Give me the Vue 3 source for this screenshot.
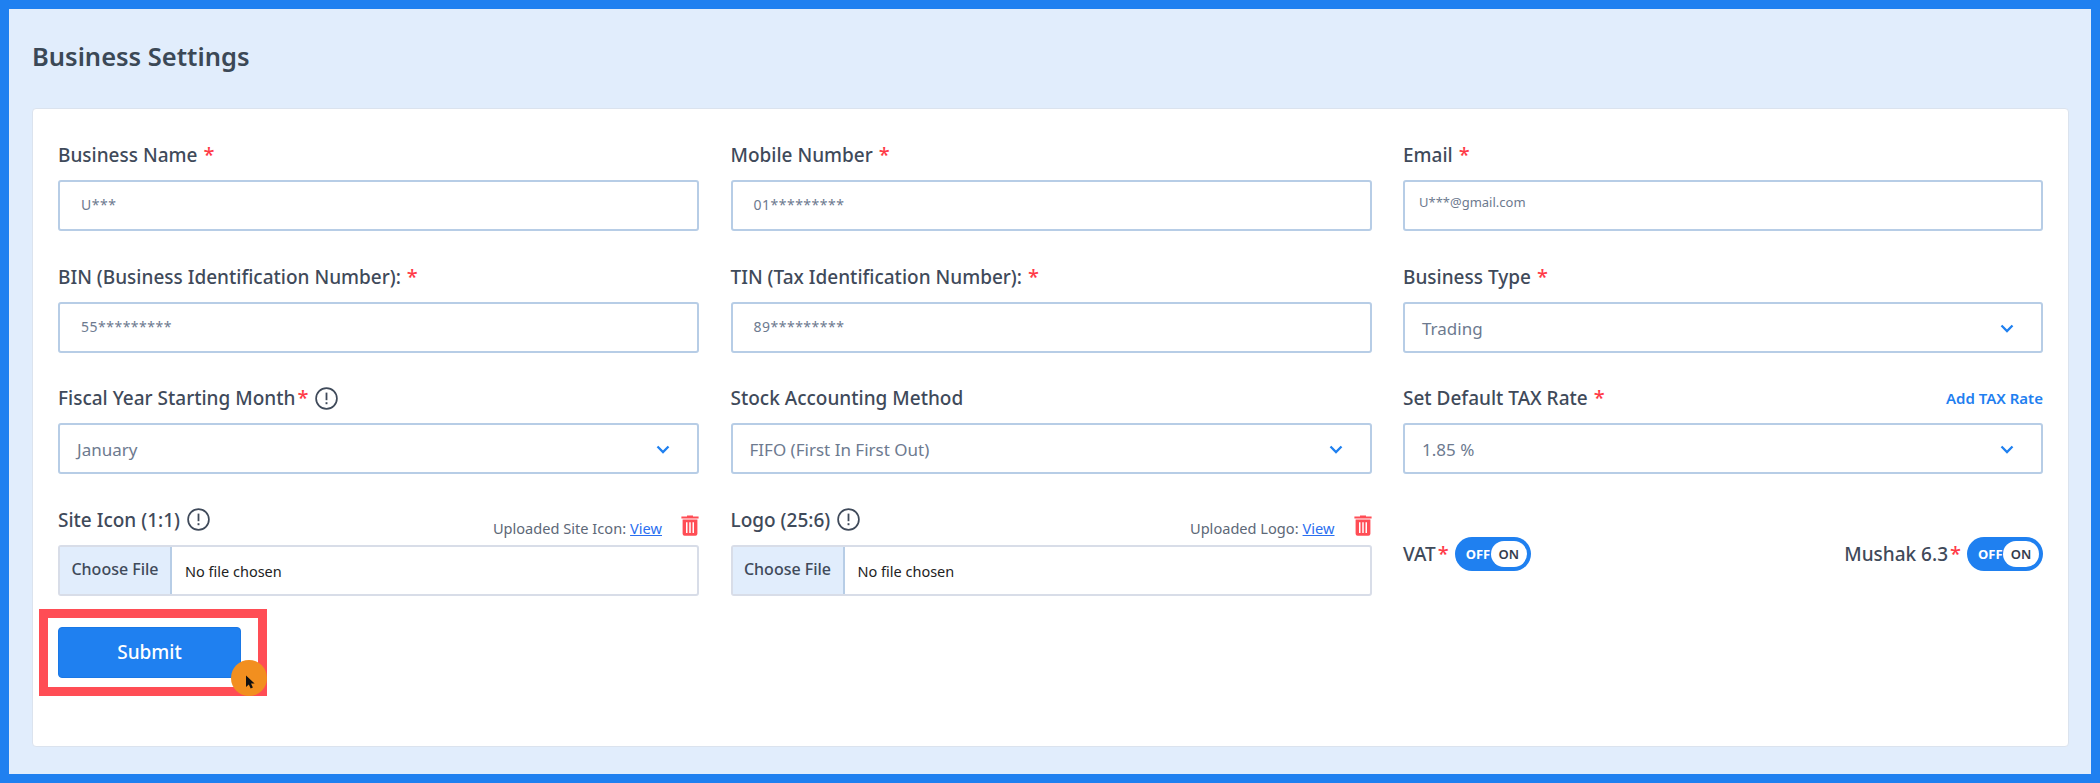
<script setup>
const fields = [
  { label: "Business Name", star: true, type: "input", value: "U***" },
  { label: "Mobile Number", star: true, type: "input", value: "01*********" },
  { label: "Email", star: true, type: "input", value: "U***@gmail.com", small: true },
  { label: "BIN (Business Identification Number):", star: true, type: "input", value: "55*********" },
  { label: "TIN (Tax Identification Number):", star: true, type: "input", value: "89*********" },
  { label: "Business Type", star: true, type: "select", value: "Trading" },
  { label: "Fiscal Year Starting Month", star: true, tight: true, info: true, type: "select", value: "January" },
  { label: "Stock Accounting Method", type: "select", value: "FIFO (First In First Out)" },
  { label: "Set Default TAX Rate", star: true, link: "Add TAX Rate", type: "select", value: "1.85 %" },
  { label: "Site Icon (1:1)", info: true, type: "file", uploaded: "Uploaded Site Icon:" },
  { label: "Logo (25:6)", info: true, type: "file", uploaded: "Uploaded Logo:" },
];

const toggles = ["VAT", "Mushak 6.3"];
</script>

<template>
  <div class="page">
    <h1 class="title">Business Settings</h1>

    <div class="card">
      <div class="grid">
        <div v-for="f in fields" :key="f.label" class="field">
          <div class="label-row">
            <label class="label">
              {{ f.label }}<span v-if="f.star" class="star" :class="{ tight: f.tight }">*</span>
            </label>
            <svg v-if="f.info" class="info" width="23" height="23" viewBox="0 0 23 23" fill="none">
              <circle cx="11.5" cy="11.5" r="10.4" stroke="#3f4a5a" stroke-width="1.7" />
              <path d="M11.5 5.6v7.6" stroke="#3f4a5a" stroke-width="1.8" />
              <path d="M11.5 15.2v2" stroke="#3f4a5a" stroke-width="1.9" />
            </svg>
            <a v-if="f.link" class="add-link">{{ f.link }}</a>
            <div v-if="f.uploaded" class="uploaded">
              <span>{{ f.uploaded }}</span>
              <a class="view">View</a>
              <svg class="trash" width="18" height="21" viewBox="0 0 18 21">
                <path d="M6 1.6V.4h6v1.2h5.6v1.8H.4V1.600z" fill="#ff4d55" />
                <path
                  fill-rule="evenodd"
                  d="M1.600 4.600h14.800v14.200a2 2 0 0 1-2 2H3.600a2 2 0 0 1-2-2zM5 7.200v10.800h1.500V7.200zM8.250 7.200v10.800h1.500V7.200zM11.500 7.200v10.800H13V7.200z"
                  fill="#ff4d55"
                />
              </svg>
            </div>
          </div>

          <div v-if="f.type === 'input'" class="control text-input" :class="{ small: f.small }">
            {{ f.value }}
          </div>

          <div v-else-if="f.type === 'select'" class="control select">
            <span>{{ f.value }}</span>
            <svg width="14" height="9" viewBox="0 0 14 9" fill="none">
              <path d="M1.500 1.500 7 7l5.500-5.500" stroke="#1f80f0" stroke-width="2.300" />
            </svg>
          </div>

          <div v-else class="control file">
            <span class="file-btn">Choose File</span>
            <span class="file-name">No file chosen</span>
          </div>
        </div>

        <div class="toggles">
          <div v-for="t in toggles" :key="t" class="toggle-item">
            <span class="toggle-label">{{ t }}<span class="star tight">*</span></span>
            <div class="toggle">
              <span class="off">OFF</span>
              <span class="on">ON</span>
            </div>
          </div>
        </div>
      </div>

      <div class="submit-wrap">
        <button class="submit" type="button">Submit</button>
        <div class="highlight"></div>
        <div class="pointer">
          <svg width="11" height="14" viewBox="0 0 11 14">
            <path d="M1 0.500v11.500l2.800-2.600 1.900 4.200 2.200-1-1.900-4.100h3.600z" fill="#111" />
          </svg>
        </div>
      </div>
    </div>
  </div>
</template>

<style>
body {
  margin: 0;
}
</style>

<style scoped>
.page {
  box-sizing: border-box;
  width: 2100px;
  height: 783px;
  border: 9px solid #1f80f0;
  background: #e1edfc;
  padding: 30px 22px 27px 23px;
  font-family: "Noto Sans", sans-serif;
  color: #3f4a5a;
}

.title {
  margin: 0 0 35px;
  font-size: 25.5px;
  line-height: 34px;
  font-weight: 600;
  color: #3b4856;
}

.card {
  box-sizing: border-box;
  height: 639px;
  background: #fff;
  border: 1px solid #dbe3ee;
  border-radius: 4px;
  padding: 31px 25px 0;
}

.grid {
  display: grid;
  grid-template-columns: 641px 641px 640px;
  column-gap: 31.5px;
  row-gap: 30.5px;
}

.field {
  min-width: 0;
}

.label-row {
  display: flex;
  align-items: center;
  height: 30px;
  margin-bottom: 10px;
}

.label {
  font-size: 19px;
  line-height: 30px;
  font-weight: 500;
  color: #3f4a5a;
}

.star {
  margin-left: 6px;
  color: #ff3b47;
  font-size: 20px;
  line-height: 0;
}

.star.tight {
  margin-left: 2px;
}

.info {
  margin-left: 7px;
}

.add-link {
  margin-left: auto;
  font-size: 15px;
  font-weight: 600;
  color: #1f80f0;
}

.uploaded {
  margin-left: auto;
  display: flex;
  align-items: center;
  padding-top: 16px;
  font-size: 14.6px;
  color: #5d6877;
}

.view {
  margin-left: 4px;
  color: #2b6ff0;
  text-decoration: underline;
}

.trash {
  margin-left: 19px;
  margin-top: -4px;
}

.control {
  box-sizing: border-box;
  height: 51px;
  border: 2px solid #b7cde6;
  border-radius: 3px;
  background: #fff;
}

.text-input {
  padding: 11px 21px 0;
  font-size: 14px;
  line-height: 24px;
  letter-spacing: 0.5px;
  color: #6d7a8f;
}

.text-input.small {
  padding: 8px 14px 0;
  font-size: 13px;
  letter-spacing: 0;
}

.select {
  display: flex;
  align-items: center;
  justify-content: space-between;
  padding: 2px 27px 0 17px;
  font-size: 17px;
  color: #6d7a8f;
}

.file {
  display: flex;
  align-items: center;
  border-color: #d8dde8;
}

.file-btn {
  box-sizing: border-box;
  flex: none;
  width: 112px;
  height: 47px;
  line-height: 45px;
  text-align: center;
  font-size: 16px;
  font-weight: 500;
  color: #3f4a5a;
  background: #e1edfc;
  border-right: 2px solid #b7cde6;
}

.file-name {
  margin-left: 13px;
  margin-top: 2px;
  font-size: 14.5px;
  color: #222;
}

.toggles {
  display: flex;
  align-items: center;
  justify-content: space-between;
  padding-top: 8px;
}

.toggle-item {
  display: flex;
  align-items: center;
  gap: 6px;
}

.toggle-label {
  font-size: 19px;
  font-weight: 500;
  color: #3f4a5a;
}

.toggle {
  box-sizing: border-box;
  display: flex;
  align-items: center;
  justify-content: space-between;
  width: 76px;
  height: 34px;
  padding: 4px;
  border-radius: 17px;
  background: #1f80f0;
}

.off {
  margin-left: 7px;
  font-size: 13px;
  font-weight: 700;
  color: #fff;
}

.on {
  width: 36px;
  height: 26px;
  line-height: 26px;
  text-align: center;
  border-radius: 13px;
  font-size: 13px;
  font-weight: 600;
  color: #333c4c;
  background: #fff;
}

.submit-wrap {
  position: relative;
  width: 183px;
  margin-top: 31px;
}

.submit {
  display: block;
  width: 183px;
  height: 51px;
  border: 1px solid #1a78e6;
  border-radius: 4px;
  background: #1f80f0;
  font-family: inherit;
  font-size: 19px;
  font-weight: 500;
  color: #fff;
}

.highlight {
  position: absolute;
  left: -19px;
  top: -18px;
  width: 228px;
  height: 87px;
  box-sizing: border-box;
  border: 9px solid #ff4d55;
}

.pointer {
  position: absolute;
  left: 173px;
  top: 33px;
  width: 36px;
  height: 36px;
  border-radius: 50%;
  background: #f28f1f;
  display: flex;
  align-items: center;
  justify-content: center;
}

.pointer svg {
  margin-top: 8px;
  margin-left: 2px;
}
</style>
